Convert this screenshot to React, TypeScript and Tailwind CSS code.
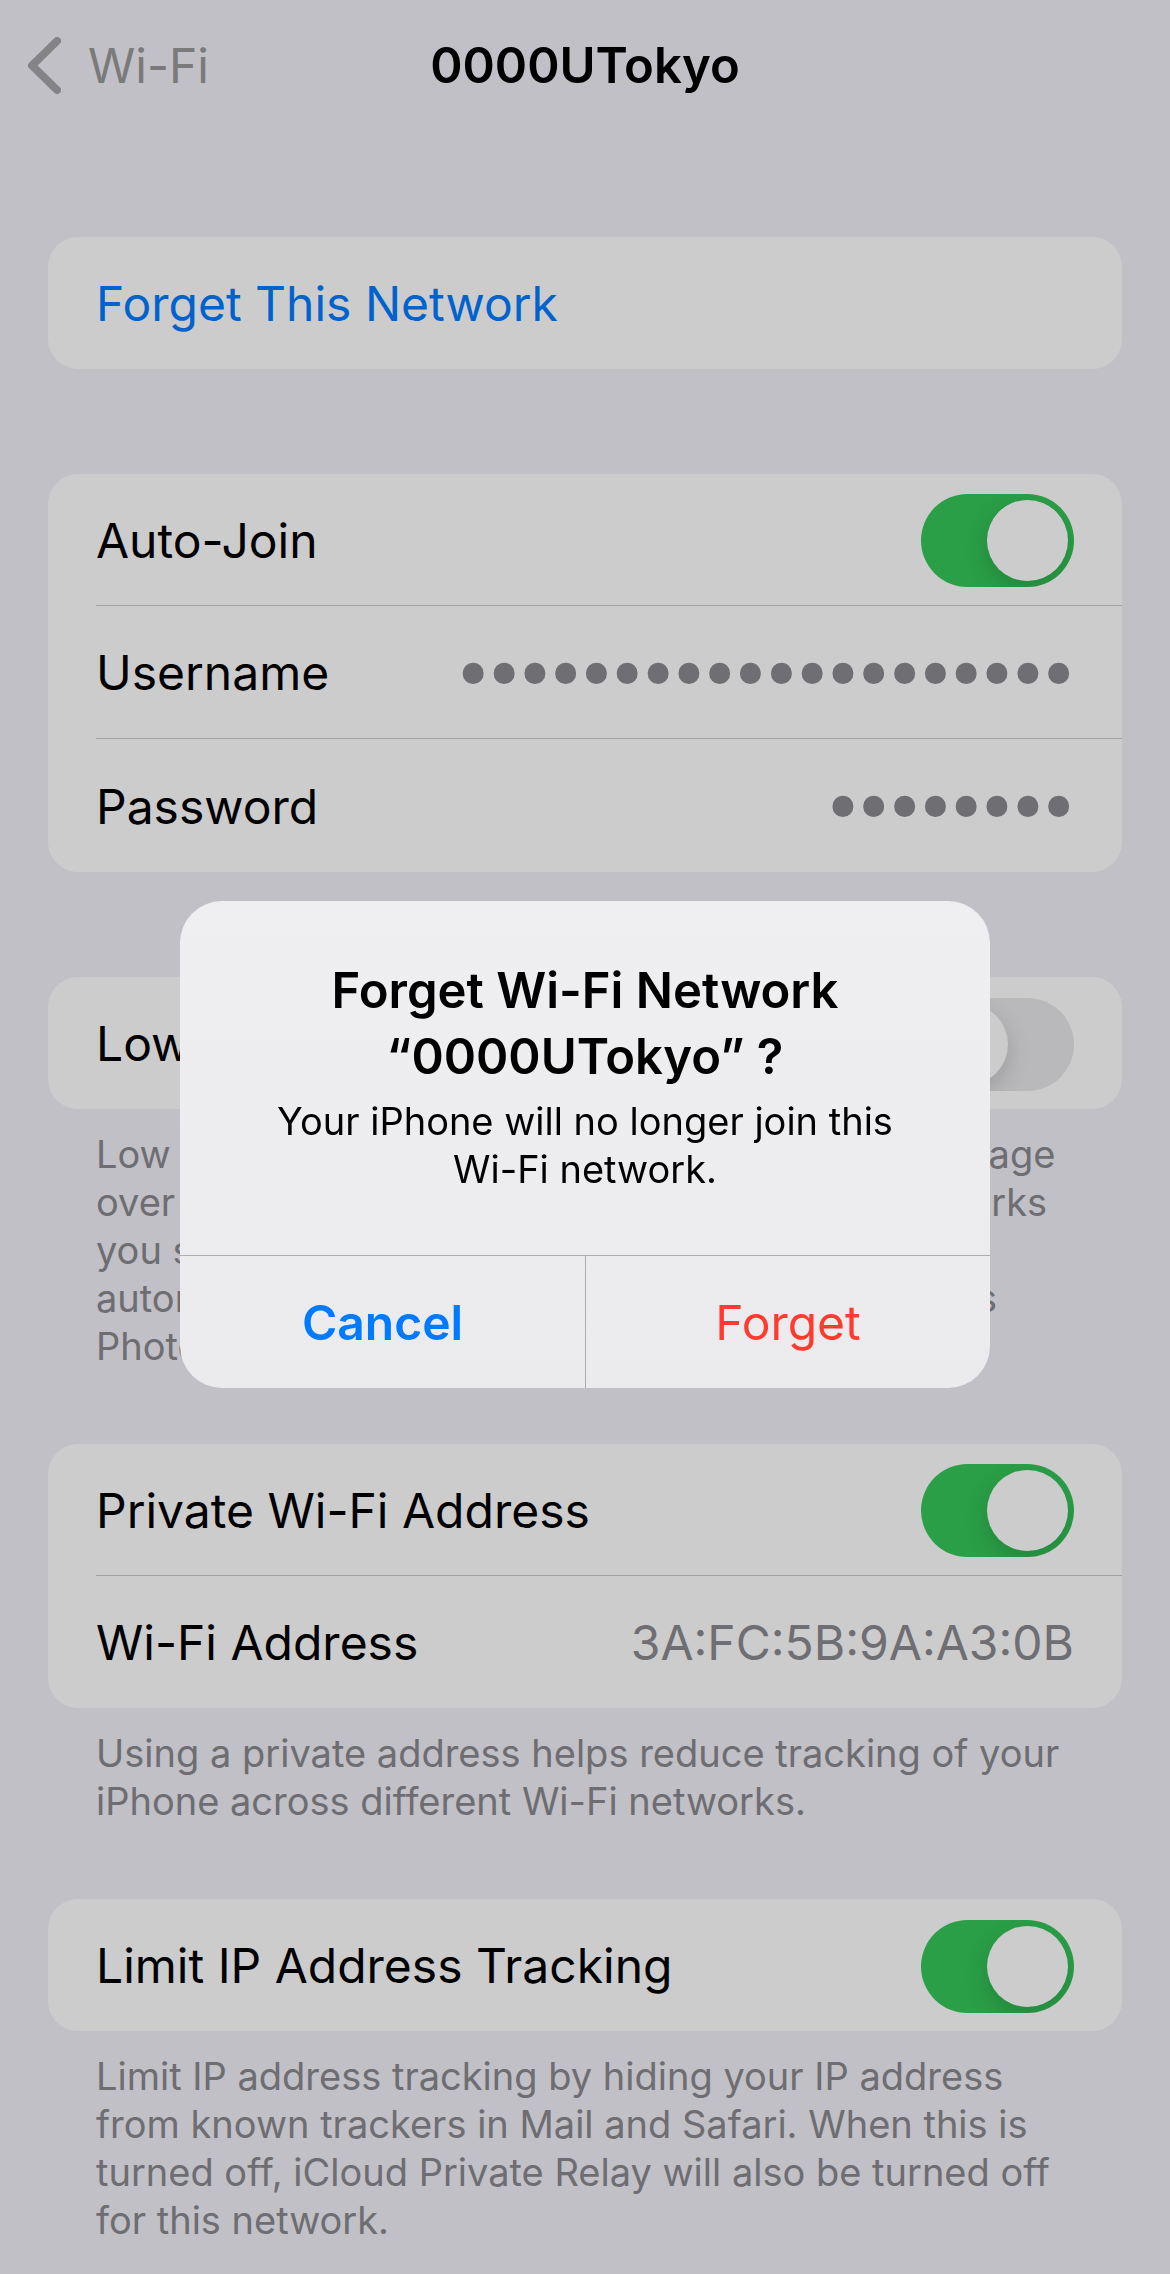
import type { ReactNode } from "react";

function Switch({ id, on }: { id: string; on: boolean }) {
  return (
    <input
      id={id}
      type="checkbox"
      role="switch"
      defaultChecked={on}
      className="flex h-[93px] w-[153px] shrink-0 cursor-pointer appearance-none items-center overflow-hidden rounded-full bg-[#b9b9bb] px-1.5 before:size-[81px] before:rounded-full before:bg-[#cccccc] before:shadow-[0_9px_24px_rgba(0,0,0,0.16)] before:content-[''] checked:justify-end checked:bg-[#2a9f47]"
    />
  );
}

function Row({ children, tall = false }: { children: ReactNode; tall?: boolean }) {
  return (
    <div
      className={`${tall ? "h-[133px]" : "h-[132px]"} ml-12 flex items-center justify-between gap-8 border-b border-[#a2a2a4] pt-0.5 pr-12 last:border-b-0`}
    >
      {children}
    </div>
  );
}

function Card({ children }: { children: ReactNode }) {
  return <div className="overflow-hidden rounded-[30px] bg-[#cccccc] text-5xl text-black">{children}</div>;
}

function ToggleRow({ id, label, on }: { id: string; label: string; on: boolean }) {
  return (
    <Row>
      <label htmlFor={id}>{label}</label>
      <Switch id={id} on={on} />
    </Row>
  );
}

function SecretRow({ id, label, value }: { id: string; label: string; value: string }) {
  return (
    <Row tall>
      <label htmlFor={id}>{label}</label>
      <input
        id={id}
        type="password"
        readOnly
        defaultValue={value}
        className="h-24 min-w-0 flex-1 bg-transparent text-right font-['Liberation_Serif',serif] text-[88px] text-[#6e6e73] outline-none"
      />
    </Row>
  );
}

function Footnote({ lines }: { lines: string[] }) {
  return (
    <p className="mt-[21px] pl-12 text-[38px] leading-[48px] whitespace-nowrap text-[#6d6d72]">
      {lines.map((line) => (
        <span key={line} className="block">
          {line}
        </span>
      ))}
    </p>
  );
}

export default function App() {
  return (
    <div className="min-h-screen overflow-hidden bg-[#c1c0c6] font-['Inter',sans-serif]">
      <header className="grid h-[132px] grid-cols-[1fr_auto_1fr] items-center px-[27px]">
        <a href="#wifi" className="flex items-center gap-[27px] text-5xl text-[#7a7a7b]">
          <svg viewBox="0 0 34 58" className="h-[58px] w-[34px] text-[#848487]" fill="none" aria-hidden="true">
            <path d="M30 4 5 28.5 30 53" stroke="currentColor" strokeWidth="8" strokeLinecap="round" strokeLinejoin="round" />
          </svg>
          Wi-Fi
        </a>
        <h1 className="text-[49px] font-semibold text-black">0000UTokyo</h1>
      </header>

      <main className="px-12 pt-[105px] pb-8">
        <Card>
          <button type="button" className="block h-[132px] w-full px-12 pt-0.5 text-left text-[#0062cc]">
            Forget This Network
          </button>
        </Card>

        <section className="mt-[105px]">
          <Card>
            <ToggleRow id="auto-join" label="Auto-Join" on />
            <SecretRow id="username" label="Username" value="********************" />
            <SecretRow id="password" label="Password" value="********" />
          </Card>
        </section>

        <section className="mt-[105px]">
          <Card>
            <ToggleRow id="low-data" label="Low Data Mode" on={false} />
          </Card>
          <Footnote
            lines={[
              "Low Data Mode helps reduce your iPhone data usage",
              "over your cellular network or specific Wi-Fi networks",
              "you select. When Low Data Mode is turned on,",
              "automatic updates and background tasks, such as",
              "Photos syncing, are paused.",
            ]}
          />
        </section>

        <section className="mt-[74px]">
          <Card>
            <ToggleRow id="private-address" label="Private Wi-Fi Address" on />
            <Row>
              <span>Wi-Fi Address</span>
              <span className="text-[#6e6e73]">3A:FC:5B:9A:A3:0B</span>
            </Row>
          </Card>
          <Footnote
            lines={[
              "Using a private address helps reduce tracking of your",
              "iPhone across different Wi-Fi networks.",
            ]}
          />
        </section>

        <section className="mt-[74px]">
          <Card>
            <ToggleRow id="limit-ip" label="Limit IP Address Tracking" on />
          </Card>
          <Footnote
            lines={[
              "Limit IP address tracking by hiding your IP address",
              "from known trackers in Mail and Safari. When this is",
              "turned off, iCloud Private Relay will also be turned off",
              "for this network.",
            ]}
          />
        </section>
      </main>

      <div className="fixed inset-0 flex items-center justify-center pt-[15px]">
        <div
          role="alertdialog"
          aria-modal="true"
          aria-labelledby="alert-title"
          aria-describedby="alert-message"
          className="w-[810px] overflow-hidden rounded-[42px] bg-linear-to-b from-[#efeff1] to-[#ebebee] text-center text-black"
        >
          <div className="px-12 pt-[57px] pb-[62px]">
            <h2 id="alert-title" className="text-[49px] leading-[66px] font-semibold">
              Forget Wi-Fi Network
              <br />
              “0000UTokyo” ?
            </h2>
            <p id="alert-message" className="mt-[7px] text-[38px] leading-[48px]">
              Your iPhone will no longer join this
              <br />
              Wi-Fi network.
            </p>
          </div>
          <div className="grid grid-cols-2 border-t border-[#adadb0] text-5xl">
            <button type="button" className="h-[132px] pt-0.5 font-semibold text-[#007aff]">
              Cancel
            </button>
            <button type="button" className="h-[132px] border-l border-[#adadb0] pt-0.5 text-[#ff3b30]">
              Forget
            </button>
          </div>
        </div>
      </div>
    </div>
  );
}
